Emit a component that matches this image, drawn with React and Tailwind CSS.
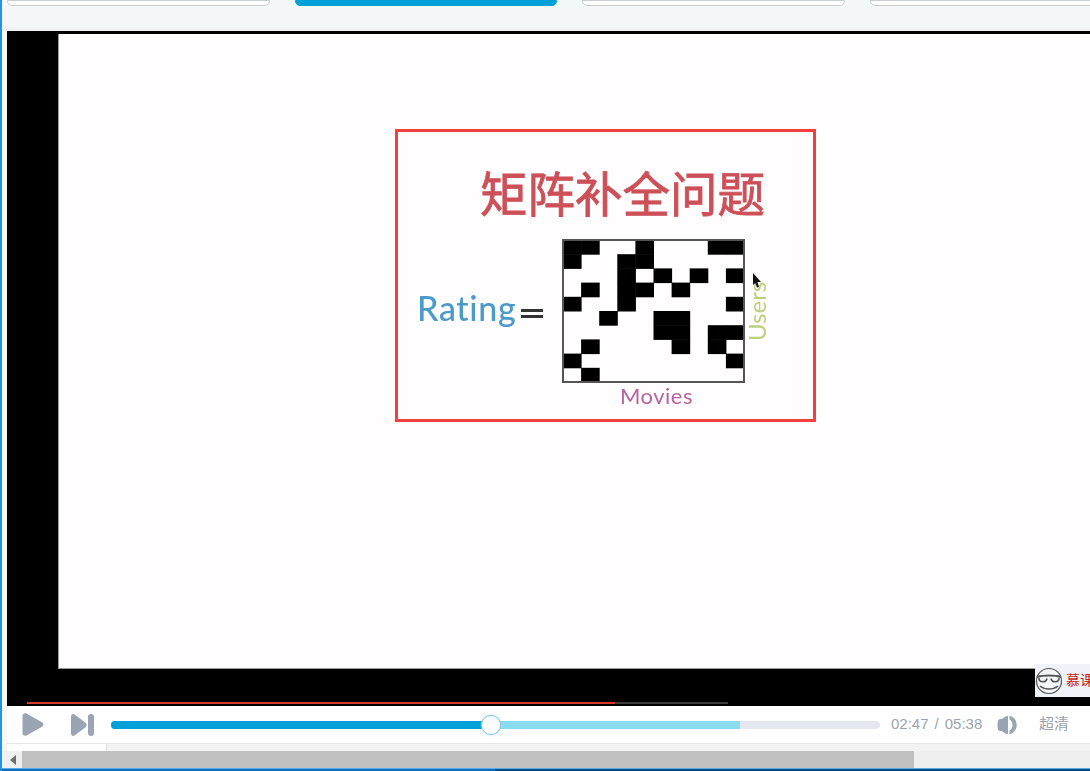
const cells = [
  [0, 1, 4, 8, 9],
  [0, 3, 4],
  [3, 5, 7, 9],
  [1, 3, 4, 6],
  [0, 3, 9],
  [2, 5, 6],
  [5, 6, 8, 9],
  [1, 6, 8],
  [0, 9],
  [1],
];

const tabs = ['bg-white border-[#c9ced3]', 'bg-[#00a0d8] border-[#00a0d8]', 'bg-white border-[#c9ced3]', 'bg-white border-[#c9ced3]'];

const Matrix = () => (
  <svg width="183" height="144" viewBox="0 0 183 144" className="block blur-[0.4px]">
    {cells.map((row, r) =>
      row.map((c) => <rect key={`${r}-${c}`} x={1 + c * 18.1} y={1 + r * 14.2} width="18.6" height="14.7" fill="#000" />)
    )}
    <rect x="1" y="1" width="181" height="142" fill="none" stroke="#555" strokeWidth="2" />
  </svg>
);

const PlayIcon = () => (
  <svg width="22" height="23" viewBox="0 0 22 23" fill="#9aa4b2">
    <path d="M0.5 3C0.5 0.8 2.6-0.4 4.5 0.6L20 9.2C21.9 10.3 21.9 12.7 20 13.8L4.5 22.4C2.6 23.4 0.5 22.2 0.5 20Z" />
  </svg>
);

const NextIcon = () => (
  <svg width="23" height="22" viewBox="0 0 23 22" fill="#9aa4b2">
    <path d="M0 2.5C0 0.6 1.8-0.5 3.5 0.5L14.5 8.8C16 10 16 12 14.5 13.2L3.5 21.5C1.8 22.5 0 21.4 0 19.5Z" />
    <rect x="17" y="0" width="6" height="22" rx="3" />
  </svg>
);

const VolumeIcon = () => (
  <svg width="20" height="20" viewBox="0 0 20 20" fill="#9aa4b2">
    <path d="M11 1V19C8 19 6.5 17 5 16H3C1.5 16 0.5 14 0.5 10S1.5 4 3 4H5C6.5 3 8 1 11 1Z" />
    <path d="M12.5 0.8C16.8 1.8 19.7 5.5 19.7 10S16.8 18.2 12.5 19.2V15.5C14.5 14.5 15.5 12.5 15.5 10S14.5 5.5 12.5 4.5Z" />
  </svg>
);

const FaceLogo = () => (
  <svg width="28" height="30" viewBox="0 0 28 30" fill="none" stroke="#555" strokeWidth="1.2" className="shrink-0">
    <circle cx="14" cy="15" r="12.5" fill="#f4f6fa" />
    <path d="M2 11C8 9 20 9 26 11" strokeWidth="2" />
    <path d="M4 12C4 17 11 17 12 12.5M16 12.5C17 17 24 17 24 12" strokeWidth="1.6" />
    <path d="M5 20C10 24 18 24 23 20" strokeWidth="1.6" />
  </svg>
);

export default function App() {
  return (
    <div className="h-[771px] w-[1090px] overflow-hidden flex flex-col bg-[#f4f8f9] border-l-2 border-[#2a90e0] font-['Liberation_Sans','Noto_Sans_CJK_SC',sans-serif]">
      {/* tabs cut off by the top edge */}
      <div className="h-[6px] flex gap-[25px] pl-[5px] shrink-0">
        {tabs.map((cls, i) => (
          <div key={i} className={`h-[6px] w-[262.5px] shrink-0 border rounded-b-[5px] ${cls}`} />
        ))}
      </div>
      <div className="h-[25px] shrink-0 bg-gradient-to-b from-[#f4f8f9] from-80% to-[#eceff0]" />

      {/* player */}
      <div className="ml-[5px] shrink-0 h-[675px] bg-black flex flex-col relative">
        <div className="mt-[3px] ml-[51px] h-[635px] bg-[#fffdfe] border-l border-b border-[#999] pl-[336px] pt-[95px] shrink-0">
          <div className="w-[421px] h-[293px] border-[3px] border-[#f43f3f] flex flex-col font-['Noto_Sans_CJK_SC',sans-serif]">
            <div className="ml-[82px] mt-[30px] h-[60px] text-[47.5px] leading-[60px] font-normal text-[#cd5058] [-webkit-text-stroke:0.8px_#cd5058] whitespace-nowrap blur-[0.3px]">
              矩阵补全问题
            </div>
            <div className="mt-[17px] flex items-start relative">
              <div className="w-[164px] pl-[19px] h-[136px] flex items-center font-['Lato',sans-serif]">
                <span className="text-[34px] font-medium text-[#4a9bcb] tracking-[0.7px] blur-[0.3px]">Rating</span>
                <span className="ml-[4px] flex flex-col gap-[3px] mt-[12px]">
                  <span className="block w-[22px] h-[3px] bg-[#333]" />
                  <span className="block w-[22px] h-[3px] bg-[#333]" />
                </span>
              </div>
              <div className="flex flex-col items-center">
                <Matrix />
                <div className="pl-[6px] text-[22px] leading-[26px] tracking-[0.5px] font-['Lato',sans-serif] text-[#b9629f] blur-[0.3px]">Movies</div>
              </div>
              <div className="mt-[42px] h-[60px] text-[24px] leading-[24px] font-['Lato',sans-serif] text-[#bdd07e] [writing-mode:vertical-rl] rotate-180 text-center blur-[0.3px]">
                Users
              </div>
              <svg width="10" height="15" viewBox="0 0 10 15" className="absolute left-[354px] top-[34px]" fill="#111">
                <path d="M1 0L9 9L5.5 9L7 14L5 14.5L3.5 10L1 12Z" />
              </svg>
            </div>
          </div>
        </div>
        {/* progress of the recorded video */}
        <div className="mt-auto mb-[2px] ml-[20px] flex h-[2px]">
          <div className="w-[588px] bg-[#d8392b]" />
          <div className="w-[113px] bg-[#3d3d3d]" />
        </div>
        {/* watermark */}
        <div className="absolute left-[1028px] top-[633px] w-[55px] h-[33px] bg-[#eff3f9] flex items-center gap-[3px] overflow-hidden">
          <FaceLogo />
          <span className="text-[14px] text-[#c0241e] whitespace-nowrap">慕课网</span>
        </div>
      </div>

      {/* controls */}
      <div className="ml-[5px] shrink-0 h-[38px] bg-white border-b border-[#e5e5e5] flex items-center">
        <div className="ml-[15px] w-[49px] shrink-0"><PlayIcon /></div>
        <div className="w-[40px] shrink-0"><NextIcon /></div>
        <div className="relative w-[769px] h-[8px] rounded-full bg-[#e4e7f0] shrink-0">
          <div className="absolute left-0 top-0 h-full w-[629px] bg-[#8cdcf0] rounded-l-full" />
          <div className="absolute left-0 top-0 h-full w-[380px] bg-[#00a0d8] rounded-l-full" />
          <div className="absolute left-[370px] top-[-6px] w-[20px] h-[20px] rounded-full bg-white border border-[#8cc8e8] shadow-[0_0_2px_#8cc8e8]" />
        </div>
        <div className="ml-[11px] w-[106px] shrink-0 flex text-[15px] text-[#9aa3b0] whitespace-nowrap">
          <span>02:47</span>
          <span className="mx-[6px]">/</span>
          <span>05:38</span>
        </div>
        <VolumeIcon />
        <span className="ml-[22px] text-[15px] text-[#9aa3b0] whitespace-nowrap">超清</span>
      </div>

      {/* strip under the player */}
      <div className="h-[7px] shrink-0 flex bg-[#f3f3f3]">
        <div className="ml-[5px] w-[100px] bg-white border-r border-[#e0e0e0]" />
      </div>

      {/* horizontal scrollbar */}
      <div className="h-[17px] shrink-0 bg-[#f0f0f0] flex items-center">
        <div className="w-[20px] flex justify-center pl-[1px]">
          <svg width="6" height="10" viewBox="0 0 6 10" fill="#6d6d6d"><path d="M6 0V10L0 5Z" /></svg>
        </div>
        <div className="w-[892px] h-[17px] bg-[#c1c1c1]" />
      </div>
      <div className="h-[1px] shrink-0 bg-[#59aee6]" />
      <div className="h-[2px] shrink-0 flex bg-[#0a4a86]">
        <div className="w-[493px] bg-[#0d6fbf]" />
      </div>
    </div>
  );
}
